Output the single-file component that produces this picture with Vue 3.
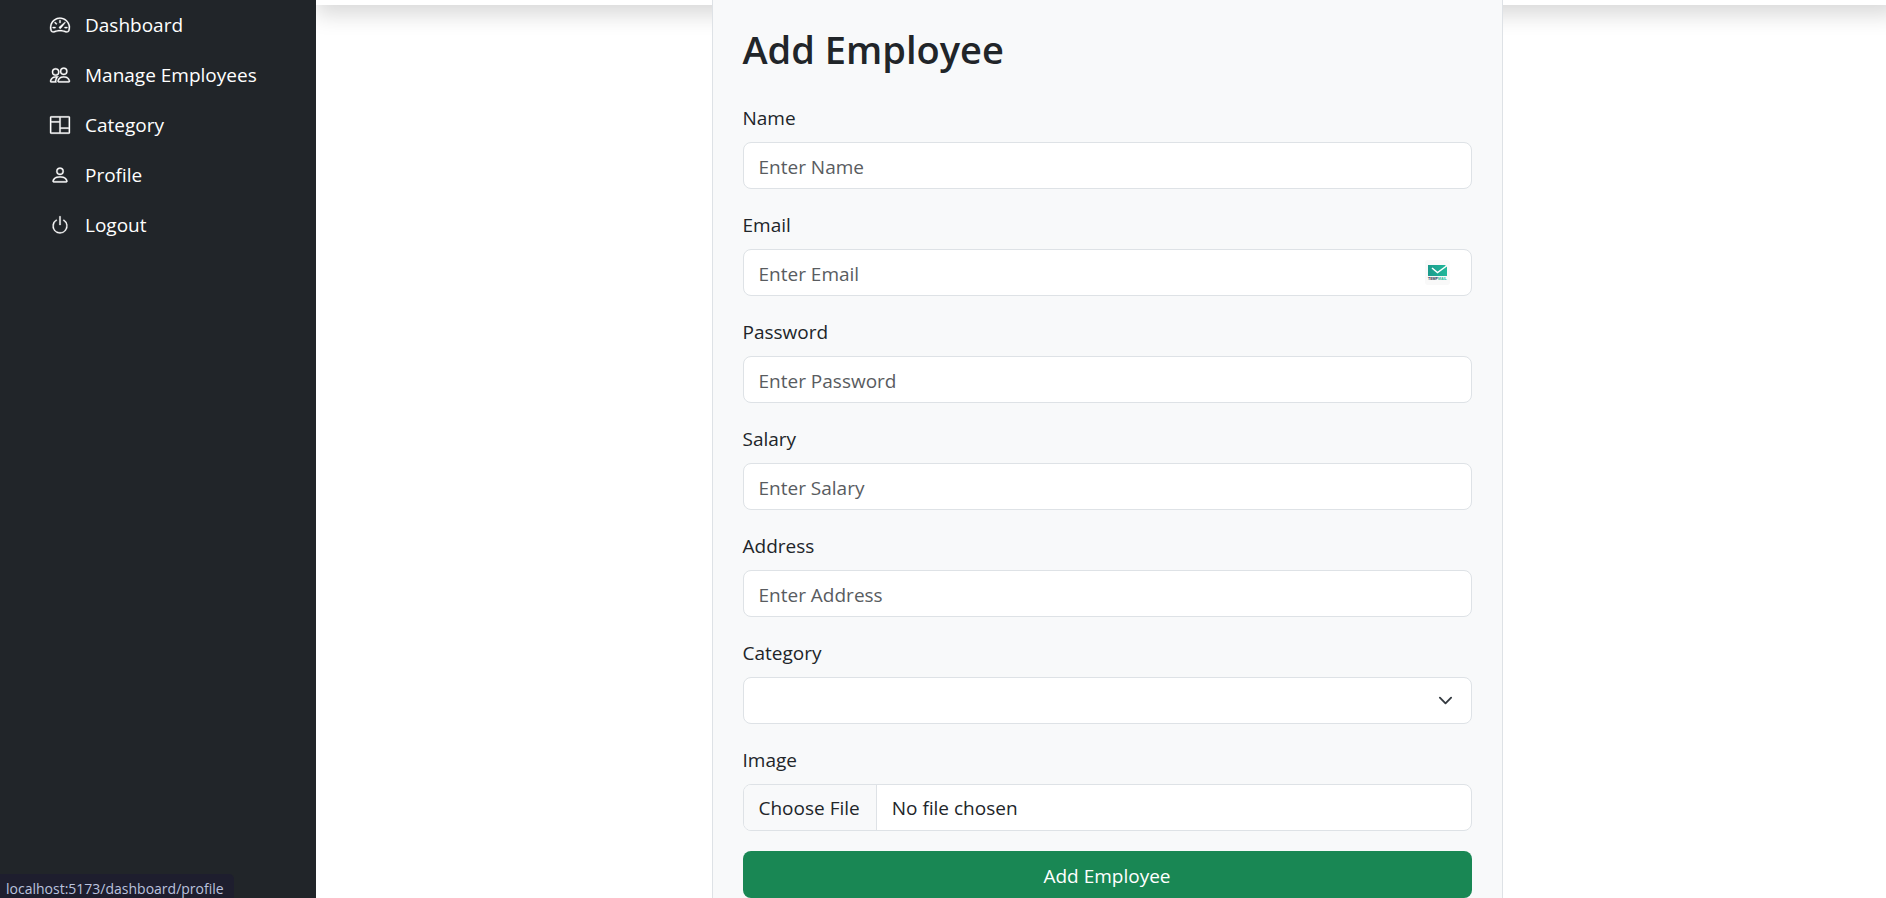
<script setup>
import { ref } from 'vue'

const links = [
  {
    text: 'Dashboard',
    href: '#/dashboard',
    paths: [
      'M8 4a.5.5 0 0 1 .5.5V6a.5.5 0 0 1-1 0V4.5A.5.5 0 0 1 8 4M3.732 5.732a.5.5 0 0 1 .707 0l.915.914a.5.5 0 1 1-.708.708l-.914-.915a.5.5 0 0 1 0-.707M2 10a.5.5 0 0 1 .5-.5h1.586a.5.5 0 0 1 0 1H2.5A.5.5 0 0 1 2 10m9.5 0a.5.5 0 0 1 .5-.5h1.5a.5.5 0 0 1 0 1H12a.5.5 0 0 1-.5-.5m.754-4.246a.39.39 0 0 0-.527-.02L7.547 9.31a.91.91 0 1 0 1.302 1.258l3.434-4.297a.39.39 0 0 0-.029-.518z',
      'M0 10a8 8 0 1 1 15.547 2.661c-.442 1.253-1.845 1.602-2.932 1.25C11.309 13.488 9.475 13 8 13c-1.474 0-3.31.488-4.615.911-1.087.352-2.49.003-2.932-1.25A8 8 0 0 1 0 10m8-7a7 7 0 0 0-6.603 9.329c.203.575.923.876 1.68.63C4.397 12.533 6.358 12 8 12s3.604.532 4.923.96c.757.245 1.477-.056 1.68-.631A7 7 0 0 0 8 3',
    ],
  },
  {
    text: 'Manage Employees',
    href: '#/dashboard/employee',
    paths: [
      'M15 14s1 0 1-1-1-4-5-4-5 3-5 4 1 1 1 1zm-7.978-1L7 12.996c.001-.264.167-1.03.76-1.72C8.312 10.629 9.282 10 11 10c1.717 0 2.687.63 3.24 1.276.593.69.758 1.457.76 1.72l-.008.002-.014.002zM11 7a2 2 0 1 0 0-4 2 2 0 0 0 0 4m3-2a3 3 0 1 1-6 0 3 3 0 0 1 6 0M6.936 9.28a6 6 0 0 0-1.23-.247A7 7 0 0 0 5 9c-4 0-5 3-5 4q0 1 1 1h4.216A2.24 2.24 0 0 1 5 13c0-1.01.377-2.042 1.09-2.904.243-.294.526-.569.846-.816M4.92 10A5.5 5.5 0 0 0 4 13H1c0-.26.164-1.03.76-1.724.545-.636 1.492-1.256 3.16-1.275ZM1.5 5.5a3 3 0 1 1 6 0 3 3 0 0 1-6 0m3-2a2 2 0 1 0 0 4 2 2 0 0 0 0-4',
    ],
  },
  {
    text: 'Category',
    href: '#/dashboard/category',
    paths: [
      'M0 2a1 1 0 0 1 1-1h14a1 1 0 0 1 1 1v12a1 1 0 0 1-1 1H1a1 1 0 0 1-1-1zm8.5 0v8H15V2zm0 9v3H15v-3zm-1-9H1v3h6.5zM1 14h6.5V6H1z',
    ],
  },
  {
    text: 'Profile',
    href: '#/dashboard/profile',
    paths: [
      'M8 8a3 3 0 1 0 0-6 3 3 0 0 0 0 6m2-3a2 2 0 1 1-4 0 2 2 0 0 1 4 0m4 8c0 1-1 1-1 1H3s-1 0-1-1 1-4 6-4 6 3 6 4m-1-.004c-.001-.246-.154-.986-.832-1.664C11.516 10.68 10.289 10 8 10s-3.516.68-4.168 1.332c-.678.678-.83 1.418-.832 1.664z',
    ],
  },
  {
    text: 'Logout',
    href: '#/logout',
    paths: [
      'M7.5 1v7h1V1z',
      'M3 8.812a5 5 0 0 1 2.578-4.375l-.485-.874A6 6 0 1 0 11 3.616l-.501.865A5 5 0 1 1 3 8.812',
    ],
  },
]

const fields = [
  { id: 'name', label: 'Name', type: 'text' },
  { id: 'email', label: 'Email', type: 'email' },
  { id: 'password', label: 'Password', type: 'password' },
  { id: 'salary', label: 'Salary', type: 'text' },
  { id: 'address', label: 'Address', type: 'text' },
]

const employee = ref({ name: '', email: '', password: '', salary: '', address: '', category: '' })
</script>

<template>
  <div class="layout">
    <nav class="sidebar">
      <ul class="menu">
        <li v-for="link in links" :key="link.text">
          <a class="menu-link" :href="link.href">
            <svg class="menu-icon" viewBox="0 0 16 16" aria-hidden="true">
              <path v-for="d in link.paths" :key="d" :d="d" />
            </svg>
            <span>{{ link.text }}</span>
          </a>
        </li>
      </ul>
    </nav>

    <main class="content">
      <div class="panel">
        <form class="card" @submit.prevent>
          <h1 class="title">Add Employee</h1>

          <div v-for="field in fields" :key="field.id" class="field">
            <label :for="field.id">{{ field.label }}</label>
            <div class="control-wrap">
              <input
                :id="field.id"
                v-model="employee[field.id]"
                class="control"
                :type="field.type"
                :placeholder="`Enter ${field.label}`"
                autocomplete="off"
              />
              <svg v-if="field.id === 'email'" class="mail-badge" viewBox="0 0 25 25" aria-hidden="true">
                <defs>
                  <linearGradient id="mail-fill" x1="0" y1="0" x2="1" y2="0">
                    <stop offset="0" stop-color="#1b9b8c" />
                    <stop offset="1" stop-color="#20b89a" />
                  </linearGradient>
                </defs>
                <rect width="25" height="25" rx="3" fill="#f9f9f9" />
                <path d="M3 5h17l2 2v9H3z" fill="url(#mail-fill)" />
                <path d="M7 8l5.500 4.500L21.500 6" fill="none" stroke="#fff" stroke-width="1.500" />
                <text class="mail-text" x="3" y="20" fill="#27304f">TEMP<tspan fill="#22b99a">MAIL</tspan></text>
              </svg>
            </div>
          </div>

          <div class="field">
            <label for="category">Category</label>
            <div class="control-wrap">
              <select id="category" v-model="employee.category" class="control">
                <option value=""></option>
              </select>
              <svg class="chevron" viewBox="0 0 16 16" aria-hidden="true">
                <path d="m2 5 6 6 6-6" />
              </svg>
            </div>
          </div>

          <div class="field">
            <label for="image">Image</label>
            <input id="image" class="control file" type="file" />
          </div>

          <button class="submit" type="submit">Add Employee</button>
        </form>
      </div>
    </main>

    <div class="status">localhost:5173/dashboard/profile</div>
  </div>
</template>

<style>
body {
  margin: 0;
  overflow: hidden;
}
</style>

<style scoped>
.layout {
  display: flex;
  height: 100vh;
  overflow: hidden;
  position: relative;
  background: #fff;
  color: #212529;
  font-family: "Segoe UI", "Open Sans", "Noto Sans", sans-serif;
  font-size: 19px;
  line-height: 30px;
}

*,
*::before,
*::after {
  box-sizing: border-box;
}

.sidebar {
  flex: 0 0 316px;
  z-index: 1;
  background: #212529;
}

.menu {
  list-style: none;
  margin: 0;
  padding: 0 50px;
}

.menu-link {
  display: flex;
  align-items: center;
  gap: 15px;
  padding: 10px 0;
  color: #fff;
  text-decoration: none;
  white-space: nowrap;
}

.menu-icon {
  width: 20px;
  height: 20px;
  overflow: visible;
  fill: currentColor;
  stroke: currentColor;
  stroke-width: 0.25;
}

.content {
  flex: 1;
  margin-right: -12px;
}

/* The panel's upper part is scrolled out of view; the form runs past its lower edge. */
.panel {
  height: 105px;
  margin-top: -100px;
  padding-top: 100px;
  box-shadow: 0 10px 20px rgba(0, 0, 0, 0.15);
}

.card {
  width: 50%;
  min-height: 100vh;
  margin: 0 auto;
  padding: 25px 30px;
  background: #f8f9fa;
  border: solid #dee2e6;
  border-width: 0 1px;
}

.title {
  margin: 0 0 29px;
  font-size: 38px;
  font-weight: 600;
  line-height: 48px;
}

.field {
  margin-bottom: 20px;
}

.field label {
  display: block;
  width: fit-content;
  margin-bottom: 8px;
  line-height: 32px;
}

.control-wrap {
  position: relative;
}

.control {
  display: block;
  width: 100%;
  height: 47px;
  padding: 9px 15px 7px;
  border: 1px solid #dee2e6;
  border-radius: 8px;
  background: #fff;
  color: #212529;
  font: inherit;
  appearance: none;
}

.control::placeholder {
  color: #595c5f;
  opacity: 1;
}

.mail-badge {
  position: absolute;
  top: 11px;
  right: 22px;
  width: 25px;
  height: 25px;
}

.mail-text {
  font: 700 3.6px "Liberation Sans", sans-serif;
}

.chevron {
  position: absolute;
  top: 16px;
  right: 19px;
  width: 15px;
  height: 15px;
  pointer-events: none;
  fill: none;
  stroke: #343a40;
  stroke-width: 2;
  stroke-linecap: round;
  stroke-linejoin: round;
}

.file {
  padding: 0;
  overflow: hidden;
  line-height: 45px;
}

.file::file-selector-button {
  height: 45px;
  margin: 0 15px 0 0;
  padding: 2px 16px 0 15px;
  border: 0 solid #dee2e6;
  border-right-width: 1px;
  background: #f8f9fa;
  color: #212529;
  font: inherit;
  line-height: 43px;
}

.submit {
  display: block;
  width: 100%;
  height: 47px;
  padding: 2px 0 0;
  border: 0;
  border-radius: 8px;
  background: #198754;
  color: #fff;
  font: inherit;
}

.status {
  position: absolute;
  z-index: 2;
  left: 0;
  bottom: 0;
  padding: 5px 10px 0 6px;
  border-top-right-radius: 5px;
  background: #1e1e2e;
  color: #bac2de;
  font-size: 14px;
  line-height: 19px;
}
</style>
